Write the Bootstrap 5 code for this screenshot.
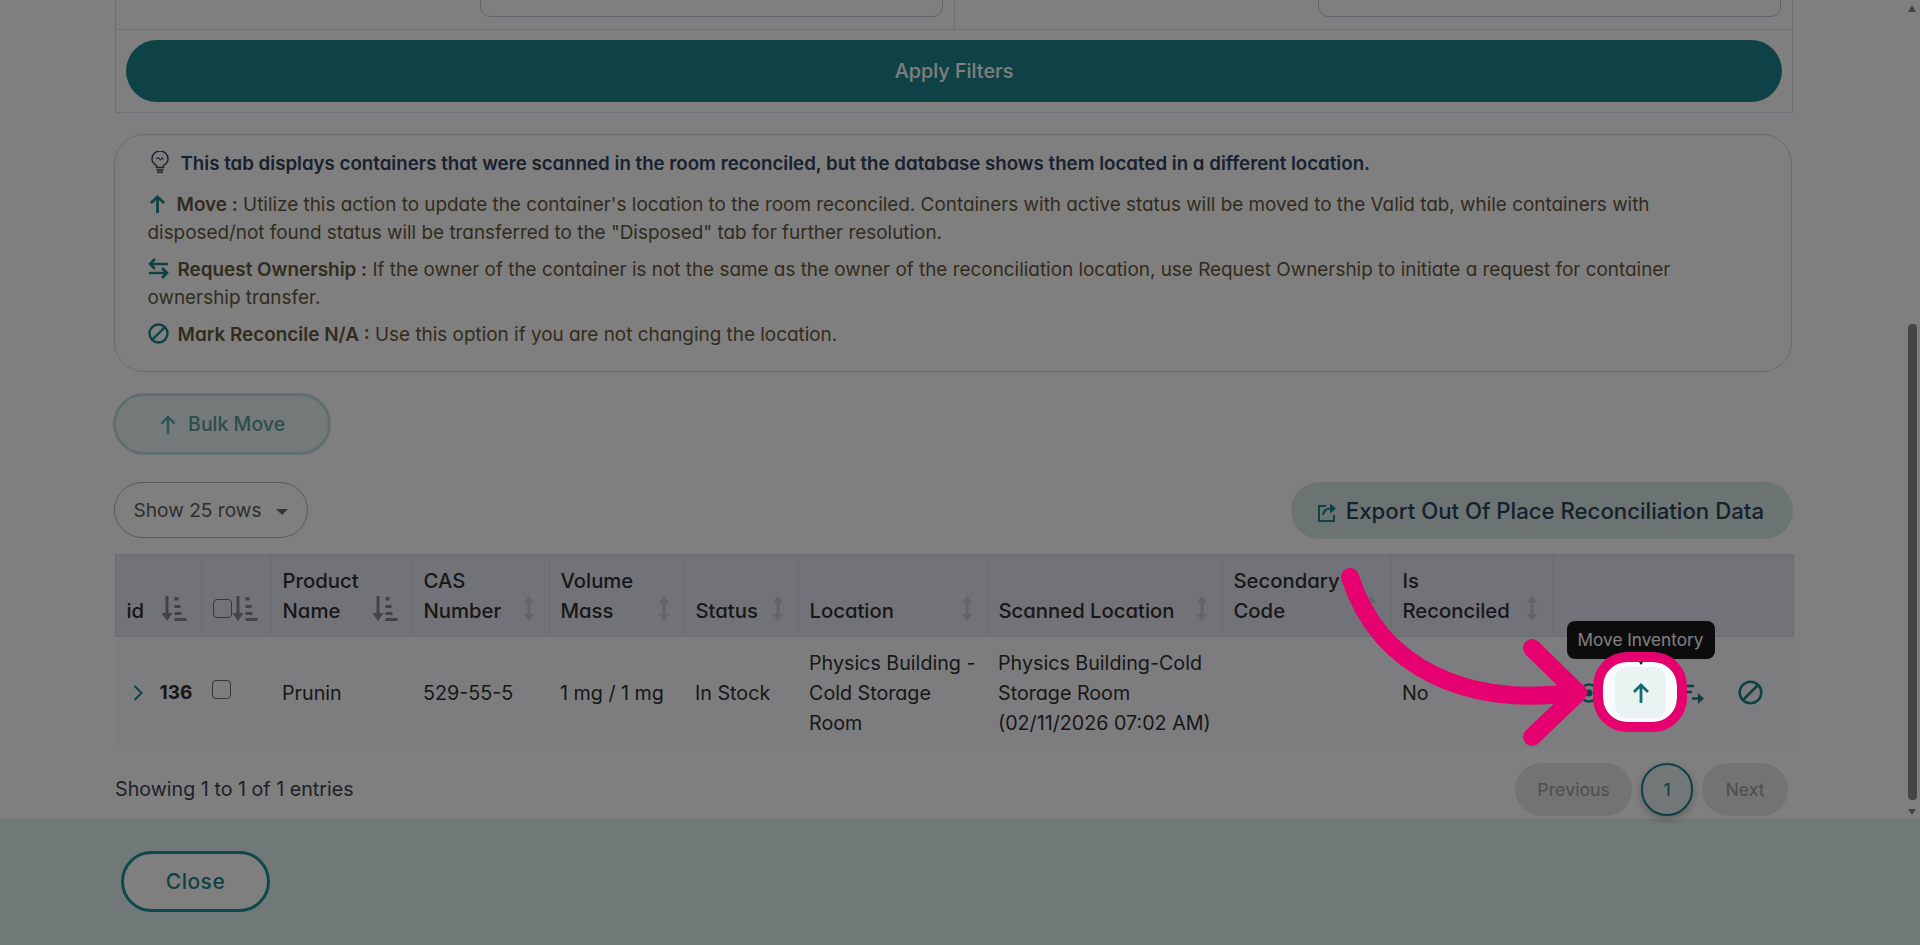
<!DOCTYPE html>
<html lang="en">

<head>
    <meta charset="UTF-8">
    <meta name="viewport" content="width=device-width, initial-scale=1.0">
    <title>Out Of Place Reconciliation</title>
    <link href="https://cdn.jsdelivr.net/npm/bootstrap@5.3.0/dist/css/bootstrap.min.css" rel="stylesheet">
    <style>
        body {
            height: 945px;
            overflow: hidden;
            position: relative;
            font-family: Inter, "Liberation Sans", sans-serif;
            font-feature-settings: "cv11";
            font-size: 18px;
            color: #3f3f3f;
            background: #fff;
        }

        .scroll-area { height: 819px; }
        .main-col { flex: 1; min-width: 0; padding-left: 115px; padding-right: 111px; }

        /* scrollbar */
        .rail { width: 16px; padding-top: 5px; padding-left: 4px; }
        .rail-up { width: 0; border: solid transparent; border-width: 0 4.5px 7px; border-bottom-color: #8a8a8a; }
        .rail-thumb { width: 9px; height: 476px; margin-top: 312px; border-radius: 4px; background: #8a8a8a; }
        .rail-down { width: 0; margin-top: 9px; border: solid transparent; border-width: 6px 4.5px 0; border-top-color: #8a8a8a; }

        /* filters */
        .filter-box { border: 1px solid #dcdfe8; border-top: 0; }
        .filter-row { height: 30px; overflow: hidden; border-bottom: 1px solid #dcdfe8; }
        .filter-col { flex: 1; padding: 0 11px 12px 0; display: flex; justify-content: flex-end; align-items: flex-end; }
        .filter-col:first-child { border-right: 1px solid #dcdfe8; }
        .filter-input { width: 463px; height: 40px; flex: none; border: 1px solid #c5c9d6; border-radius: 10px; background: #fff; }
        .filter-btn-wrap { padding: 10px; }
        .btn-apply {
            height: 62px;
            padding-top: 8px;
            border: 0;
            border-radius: 31px;
            background: #1e848c;
            color: #fff;
            font-size: 19.800px;
            font-weight: 500;
        }

        /* info panel */
        .info-box {
            margin: 21px 1px 0 -1.500px;
            padding: 15px 33px 22px;
            border: 1px solid #d4d7e2;
            border-radius: 30px;
            font-size: 18.900px;
            line-height: 28px;
            color: #64583e;
        }

        .info-box p { margin: 0 0 9px; }
        .info-box p:last-child { margin: 0; }
        .info-box .lead-line { margin-bottom: 13px; font-size: 18.700px; font-weight: 600; color: #33445c; padding-left: 3px; }
        .info-box b { font-weight: 600; }
        .info-box svg { vertical-align: -3px; margin-right: 9px; }
        .info-box .lead-line svg { margin-right: 12px; }
        .info-box .ico-up { margin-left: 1px; margin-right: 11px; }

        /* buttons above the table */
        .btn-bulk {
            display: block;
            width: 218px;
            height: 62px;
            padding-top: 8px;
            margin-top: 21px;
            margin-left: -2px;
            border: 3px solid #c0dddc;
            border-radius: 31px;
            background: #e8f2f2;
            color: #5a9a9c;
            font-size: 19.500px;
            font-weight: 500;
        }

        .btn-bulk svg { vertical-align: -3px; margin-right: 6px; }
        .toolbar { margin-top: 27px; height: 57px; }
        .btn-rows {
            width: 194px;
            height: 56px;
            margin-left: -1px;
            padding: 0 17px;
            border: 1px solid #b3b3b3;
            border-radius: 28px;
            background: #fff;
            color: #5d5d5d;
            font-size: 19.100px;
        }

        .btn-rows.dropdown-toggle::after { margin-left: 15px; vertical-align: 2px; border-top-width: 6px; border-left-width: 6px; border-right-width: 6px; color: #6b6b6b; }
        .btn-export {
            height: 57px;
            padding: 0 29px 0 26px;
            border: 0;
            border-radius: 28.500px;
            background: #d8e6e6;
            color: #2c4258;
            font-size: 22.200px;
            font-weight: 500;
        }

        .btn-export svg { vertical-align: -3px; margin-right: 8px; }

        /* table */
        .data-table { margin: 15px 0 0; width: 1678px; table-layout: fixed; font-size: 19.700px; line-height: 30px; color: #303030; border-color: #d6d9e4; }
        .table.data-table>:not(caption)>*>* { padding: 10.500px; border-bottom-width: 0; box-shadow: none; color: inherit; }
        .table.data-table>thead>tr>th {
            background: #e4e6f0;
            font-size: 20.300px;
            font-weight: 450;
            vertical-align: bottom;
            border: 1px solid #d6d9e4;
        }

        .table.data-table>tbody>tr>td { background: #fafbff; border: 0; vertical-align: middle; }
        .th-flex { display: flex; justify-content: space-between; align-items: flex-end; padding-right: 4px; }
        .th-flex svg { flex: none; margin-bottom: 5px; }
        .form-check-input.box { width: 19px; height: 19px; margin: 0; flex: none; border: 1px solid #6c6c6c; border-radius: 4px; background-color: transparent; }
        .th-check { margin-bottom: 8px !important; }
        .id-cell { padding-left: 17px; gap: 17px; font-size: 19px; font-weight: 700; color: #2e2e2e; }
        .act { width: 51px; height: 51px; flex: none; border-radius: 12px; display: flex; align-items: center; justify-content: center; background: transparent; }
        .act-move { position: relative; margin-left: 1px; background: #e8f3f2; }
        .act-swap, .act-ban { margin-left: 4px; }

        .tooltip.move-tip { position: absolute; opacity: 1; left: 50%; bottom: calc(100% + 8px); transform: translateX(-50%); font-family: inherit; font-size: 17.200px; padding: 0; }
        .move-tip .tooltip-inner { width: 148px; max-width: none; height: 38px; padding: 0; line-height: 37px; white-space: nowrap; background: #181818; border-radius: 8px; }
        .tip-nub { position: absolute; left: 50%; top: 38px; margin-left: -4px; border: solid transparent; border-width: 6px 4px 0; border-top-color: #181818; }

        /* pagination */
        .page-row { margin-top: 15px; }
        .page-row .page-info { color: #3e4252; font-size: 19.700px; }
        .page-row .pagination { gap: 10px; margin: 0 5px 0 0; }
        .page-row .page-link {
            height: 53px;
            line-height: 53px;
            padding: 0 22px;
            border: 0;
            border-radius: 27px !important;
            background: #e6e6e6;
            color: #9b9b9b;
            font-size: 17.800px;
        }

        .page-row .page-item:last-child .page-link { width: 86px; padding: 0; text-align: center; }
        .page-row .page-item.active .page-link {
            width: 52px;
            padding: 0;
            text-align: center;
            line-height: 49px;
            border: 2px solid #1e8389;
            background: #e4f1f1;
            color: #1e8389;
            box-shadow: 0 3px 8px rgba(0, 0, 0, .25);
        }

        .modal-foot { height: 126px; padding: 32px 0 0 121px; background: #e2f0f0; }
        .btn-close-modal {
            width: 149px;
            height: 61px;
            border: 3.500px solid #1a9097;
            border-radius: 31px;
            background: #fff;
            color: #1e8389;
            font-size: 21px;
            font-weight: 500;
            letter-spacing: .5px;
        }

        /* dimmed guide layer */
        .spotlight {
            position: absolute;
            left: -12px;
            top: -5px;
            width: 74px;
            height: 60px;
            z-index: 2000;
            border-radius: 24px;
            box-shadow: 0 0 0 10px #e6006f, 0 0 0 3000px rgba(0, 0, 0, .5);
        }

        .guide-arrow { position: absolute; left: 0; top: 0; z-index: 2001; pointer-events: none; }
    </style>
</head>

<body>
    <div class="scroll-area d-flex">
        <div class="main-col">
            <div class="filter-box">
                <div class="filter-row d-flex">
                    <div class="filter-col"><div class="filter-input"></div></div>
                    <div class="filter-col"><div class="filter-input"></div></div>
                </div>
                <div class="filter-btn-wrap">
                    <button type="button" class="btn btn-apply w-100">Apply Filters</button>
                </div>
            </div>

            <div class="info-box">
                <p class="lead-line">
                    <svg width="18" height="22" viewBox="0 0 18 22" fill="none" stroke="#33445c" stroke-width="1.4"><path d="M5.500 16.500v-2.200C3 13 1 10.800 1 8a8 8 0 0 1 16 0c0 2.800-2 5-4.500 6.300v2.200z"/><path d="M5.500 19h7M6 21.200h6"/><path d="M5.500 8l1.800-1.500L9.500 9l1.500-2 1.500 1.200" stroke-width="1.100"/></svg>This tab displays containers that were scanned in the room reconciled, but the database shows them located in a different location.
                </p>
                <p>
                    <svg class="ico-up" width="17" height="20" viewBox="0 0 18 19" fill="none" stroke="#1e8389" stroke-width="3"><path d="M9 19V2M2 8.500L9 2l7 6.500"/></svg><b>Move :</b> Utilize this action to update the container's location to the room reconciled. Containers with active status will be moved to the Valid tab, while containers with disposed/not found status will be transferred to the "Disposed" tab for further resolution.
                </p>
                <p>
                    <svg width="21" height="21" viewBox="0 0 21 21" fill="none" stroke="#1e8389" stroke-width="2.600"><path d="M20 6H2M7 1L2 6l5 5"/><path d="M1 15h18M14 10l5 5-5 5"/></svg><b>Request Ownership :</b> If the owner of the container is not the same as the owner of the reconciliation location, use Request Ownership to initiate a request for container ownership transfer.
                </p>
                <p>
                    <svg width="21" height="21" viewBox="0 0 21 21" fill="none" stroke="#1e8389" stroke-width="2.400"><circle cx="10.500" cy="10.500" r="9"/><path d="M4.500 16.500l12-12"/></svg><b>Mark Reconcile N/A :</b> Use this option if you are not changing the location.
                </p>
            </div>

            <button type="button" class="btn btn-bulk">
                <svg width="18" height="19" viewBox="0 0 18 19" fill="none" stroke="#5aa9ac" stroke-width="2.400"><path d="M9 19V2M2.500 8.500L9 2l6.500 6.500"/></svg> Bulk Move
            </button>

            <div class="toolbar d-flex justify-content-between align-items-start">
                <button type="button" class="btn btn-rows dropdown-toggle text-nowrap">Show 25 rows</button>
                <button type="button" class="btn btn-export text-nowrap">
                    <svg width="21" height="20" viewBox="0 0 21 20" fill="none" stroke="#1e8389" stroke-width="2"><path d="M9 4H2v15h15v-6"/><path d="M6 13c.5-4 3-6.500 8-6.500"/><path d="M13 1.500l6 5-6 5z" fill="#1e8389" stroke="none"/></svg>Export Out Of Place Reconciliation Data
                </button>
            </div>

            <table class="table data-table">
                <colgroup>
                    <col style="width:86px"><col style="width:70px"><col style="width:141px"><col style="width:137px"><col style="width:135px"><col style="width:114px"><col style="width:189px"><col style="width:235px"><col style="width:169px"><col style="width:161px"><col style="width:241px">
                </colgroup>
                <thead>
                    <tr>
                        <th><div class="th-flex">id <svg width="26" height="25"><use href="#sort-on"/></svg></div></th>
                        <th><div class="d-flex align-items-end"><input class="form-check-input box th-check" type="checkbox" aria-label="All"><svg width="26" height="25" style="margin-bottom:5px"><use href="#sort-on"/></svg></div></th>
                        <th><div class="th-flex"><span>Product<br>Name</span><svg width="26" height="25"><use href="#sort-on"/></svg></div></th>
                        <th><div class="th-flex"><span>CAS<br>Number</span><svg width="12" height="25"><use href="#sort-off"/></svg></div></th>
                        <th><div class="th-flex"><span>Volume<br>Mass</span><svg width="12" height="25"><use href="#sort-off"/></svg></div></th>
                        <th><div class="th-flex">Status <svg width="12" height="25"><use href="#sort-off"/></svg></div></th>
                        <th><div class="th-flex">Location <svg width="12" height="25"><use href="#sort-off"/></svg></div></th>
                        <th><div class="th-flex text-nowrap">Scanned Location <svg width="12" height="25"><use href="#sort-off"/></svg></div></th>
                        <th><div class="th-flex"><span>Secondary<br>Code</span><svg width="12" height="25"><use href="#sort-off"/></svg></div></th>
                        <th><div class="th-flex"><span>Is<br>Reconciled</span><svg width="12" height="25"><use href="#sort-off"/></svg></div></th>
                        <th></th>
                    </tr>
                </thead>
                <tbody>
                    <tr>
                        <td class="p-0"><div class="d-flex align-items-center id-cell"><svg width="10" height="16" viewBox="0 0 10 16" fill="none" stroke="#1e8389" stroke-width="2"><path d="M1.500 1l7 7-7 7"/></svg>136</div></td>
                        <td><input class="form-check-input box d-block" style="margin-top:-6px" type="checkbox" aria-label="Select"></td>
                        <td>Prunin</td>
                        <td>529-55-5</td>
                        <td class="text-nowrap">1 mg / 1 mg</td>
                        <td>In Stock</td>
                        <td class="text-nowrap">Physics Building -<br>Cold Storage<br>Room</td>
                        <td class="text-nowrap">Physics Building-Cold<br>Storage Room<br>(02/11/2026 07:02 AM)</td>
                        <td></td>
                        <td>No</td>
                        <td class="act-cell">
                            <div class="d-flex align-items-center">
                                <div class="act"><svg width="26" height="26" viewBox="0 0 26 26" fill="none" stroke="#1e8389" stroke-width="2.500"><circle cx="13" cy="13" r="8.500"/><circle cx="13" cy="13" r="3.500" fill="#1e8389" stroke="none"/></svg></div>
                                <div class="act act-move">
                                    <svg width="18" height="20" viewBox="0 0 18 20" fill="none" stroke="#176c70" stroke-width="2.800"><path d="M9 20V2M2 9l7-7 7 7"/></svg>
                                    <div class="tooltip bs-tooltip-top show move-tip" role="tooltip"><div class="tooltip-inner">Move Inventory</div><div class="tip-nub"></div></div>
                                    <div class="spotlight"></div>
                                </div>
                                <div class="act act-swap"><svg width="26" height="26" viewBox="0 0 26 26" fill="none" stroke="#1e8389" stroke-width="2.500"><path d="M3 6h8M3 12h6M9 18.500h8"/><path d="M15 13l6 5.500-6 5.500z" fill="#1e8389" stroke="none"/></svg></div>
                                <div class="act act-ban"><svg width="25" height="25" viewBox="0 0 25 25" fill="none" stroke="#1e8389" stroke-width="2.600"><circle cx="12.500" cy="12.500" r="10.800"/><path d="M5 20L20 5"/></svg></div>
                            </div>
                        </td>
                    </tr>
                </tbody>
            </table>

            <div class="page-row d-flex justify-content-between align-items-center">
                <span class="page-info">Showing 1 to 1 of 1 entries</span>
                <ul class="pagination">
                    <li class="page-item disabled"><span class="page-link">Previous</span></li>
                    <li class="page-item active"><span class="page-link">1</span></li>
                    <li class="page-item disabled"><span class="page-link">Next</span></li>
                </ul>
            </div>
        </div>
        <div class="rail">
            <div class="rail-up"></div>
            <div class="rail-thumb"></div>
            <div class="rail-down"></div>
        </div>
    </div>

    <div class="modal-foot">
        <button type="button" class="btn btn-close-modal">Close</button>
    </div>

    <svg width="0" height="0" class="d-block position-absolute">
        <defs>
            <g id="sort-on" fill="#87878c">
                <path d="M4.500 0h3v18h-3z"/><path d="M.5 17h11L6 25z"/>
                <path d="M13.500 1h4v3.500h-4zM13.500 9h6v3h-6zM13.500 16h7v3h-7zM13.500 22h12v3h-12z"/>
            </g>
            <g id="sort-off" fill="#c6c9d2">
                <path d="M4.500 4h3v17h-3z"/><path d="M.5 7L6 0l5.500 7zM.5 18L6 25l5.500-7z"/>
            </g>
        </defs>
    </svg>

    <svg class="guide-arrow" width="1920" height="945" fill="none" stroke="#e6006f" stroke-width="18" stroke-linecap="round" stroke-linejoin="round">
        <path d="M1350 577C1380 670 1470 708 1578 692"/>
        <path d="M1532 648L1578 693 1532 737"/>
    </svg>
</body>

</html>
